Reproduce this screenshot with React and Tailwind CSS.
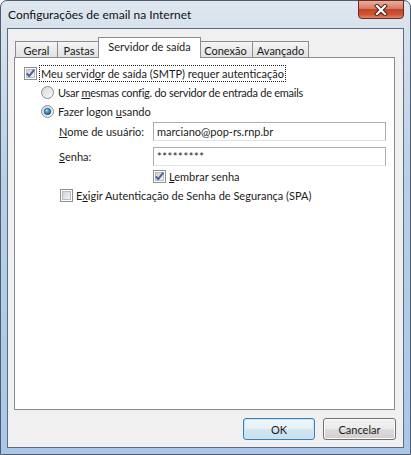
import React from 'react';

const font = "font-['Lato','Liberation_Sans',sans-serif]";

const CheckBox = ({ checked }) => (
  <svg width="13" height="13" viewBox="0 0 13 13" className="shrink-0">
    <defs>
      <linearGradient id="cbg" x1="0" y1="0" x2="1" y2="1">
        <stop offset="0" stopColor="#cbcfd5" />
        <stop offset="1" stopColor="#f7f7f7" />
      </linearGradient>
    </defs>
    <rect x="0.5" y="0.5" width="12" height="12" fill="#fff" stroke="#8e8f8f" />
    <rect x="2.5" y="2.5" width="8" height="8" fill="url(#cbg)" stroke="#b8bcc2" />
    {checked && (
      <path d="M2.8 6.4 L5.2 9.2 L10.3 2.6" fill="none" stroke="#4a5f97" strokeWidth="1.9" strokeLinejoin="round" />
    )}
  </svg>
);

const Radio = ({ checked }) => (
  <svg width="13" height="13" viewBox="0 0 13 13" className="shrink-0">
    <defs>
      <linearGradient id="rbg" x1="0" y1="0" x2="1" y2="1">
        <stop offset="0" stopColor="#d2d4d8" />
        <stop offset="1" stopColor="#fbfbfb" />
      </linearGradient>
      <radialGradient id="rdot" cx="0.4" cy="0.35" r="0.7">
        <stop offset="0" stopColor="#9fe0ff" />
        <stop offset="0.5" stopColor="#2c8ec9" />
        <stop offset="1" stopColor="#154d7a" />
      </radialGradient>
    </defs>
    <circle cx="6.5" cy="6.5" r="6" fill="url(#rbg)" stroke="#8e8f8f" />
    {checked && <circle cx="6.5" cy="6.5" r="3.3" fill="url(#rdot)" stroke="#1f4a73" strokeWidth="0.6" />}
  </svg>
);

const Tab = ({ label, className, active }) => (
  <div
    className={
      active
        ? `relative z-10 h-[21px] -mb-px bg-white border border-b-0 border-[#898c95] flex items-start justify-center pt-[3px] ${className}`
        : `h-[16px] bg-gradient-to-b from-[#f5f5f5] to-[#e2e2e2] border border-b-0 border-[#898c95] flex items-center justify-center pt-px ${className}`
    }
  >
    {label}
  </div>
);

const Button = ({ children, primary }) => (
  <button
    className={
      primary
        ? 'w-[72px] h-[22px] rounded-[3px] border border-[#3c7fb1] bg-[linear-gradient(#f0f7fb_0%,#e4f0f7_50%,#d2e6f2_50%,#c9e0ee_100%)] shadow-[inset_0_0_0_1px_#c5e4f7]'
        : 'w-[73px] h-[22px] rounded-[3px] border border-[#707070] bg-[linear-gradient(#f2f2f2_0%,#ebebeb_50%,#dddddd_50%,#cfcfcf_100%)] shadow-[inset_0_0_0_1px_#fbfbfb]'
    }
  >
    {children}
  </button>
);

export default function App() {
  return (
    <div className={`w-[411px] h-[455px] ${font} text-[11px] text-[#1b1b1b] leading-none`}>
      <div className="w-full h-full rounded-t-[7px] border border-[#4e5c6e] bg-[linear-gradient(180deg,#dfe7f0_0%,#d3dfec_10%,#b8cfe8_40%,#a9c7e8_100%)] flex flex-col">
        {/* Title bar */}
        <div className="h-[27px] flex items-start justify-between shrink-0">
          <div className="pl-[7px] pt-[8px] text-[12px] text-[#111]">Configurações de email na Internet</div>
          <div className="mr-[6px] -mt-px w-[46px] h-[19px] rounded-b-[4px] border border-[#6a2a20] bg-[linear-gradient(180deg,#eab0a0_0%,#d77a62_45%,#c4432b_50%,#d05535_80%,#e08868_100%)] flex items-center justify-center">
            <svg width="14" height="12" viewBox="0 0 14 12">
              <path d="M3 2 L11 10 M11 2 L3 10" stroke="#3b1d18" strokeWidth="4" strokeLinecap="square" />
              <path d="M3 2 L11 10 M11 2 L3 10" stroke="#fff" strokeWidth="2.2" strokeLinecap="square" />
            </svg>
          </div>
        </div>

        {/* Client area */}
        <div className="mx-[6px] mb-[6px] flex-1 border border-[#5c6b7d] bg-[#f0f0f0] flex flex-col">
          <div className="pt-[8px] pl-[6px] pr-[7px]">
            {/* Tabs */}
            <div className="flex items-end h-[20px]">
              <Tab label="Geral" className="w-[43px] ml-px" />
              <Tab label="Pastas" className="w-[44px] -ml-px" />
              <Tab label="Servidor de saída" className="w-[103px] -ml-[3px]" active />
              <Tab label="Conexão" className="w-[55px] -ml-[3px]" />
              <Tab label="Avançado" className="w-[57px] -ml-px" />
            </div>

            {/* Panel */}
            <div className="w-[381px] h-[353px] bg-white border border-[#898c95] pt-[6px]">
              <div className="h-[19px] flex items-center pl-[9px]">
                <CheckBox checked />
                <span className="ml-[2px] px-px py-[2px] border border-dotted border-[#222]">
                  Meu servid<u>o</u>r de saída (SMTP) requer autenticação
                </span>
              </div>
              <div className="h-[19px] flex items-center pl-[26px]">
                <Radio />
                <span className="ml-[4px] tracking-[-0.25px]">Usar <u>m</u>esmas config. do servidor de entrada de emails</span>
              </div>
              <div className="h-[19px] flex items-center pl-[26px]">
                <Radio checked />
                <span className="ml-[4px]">Fazer logon <u>u</u>sando</span>
              </div>
              <div className="h-[19px] flex items-center pl-[44px] mt-[1px]">
                <span className="w-[94px]"><u>N</u>ome de usuário:</span>
                <div className="w-[233px] h-full border border-[#abadb3] border-b-[#dfe3e8] px-[3px] flex items-center">
                  marciano@pop-rs.rnp.br
                </div>
              </div>
              <div className="h-[19px] flex items-center pl-[44px] mt-[6px]">
                <span className="w-[94px]"><u>S</u>enha:</span>
                <div className="w-[233px] h-full border border-[#abadb3] border-b-[#dfe3e8] px-[3px] flex items-center text-[11px] tracking-[0.6px]">
                  *********
                </div>
              </div>
              <div className="h-[19px] flex items-center pl-[138px] mt-[1px]">
                <CheckBox checked />
                <span className="ml-[3px]"><u>L</u>embrar senha</span>
              </div>
              <div className="h-[19px] flex items-center pl-[45px]">
                <CheckBox />
                <span className="ml-[3px]">E<u>x</u>igir Autenticação de Senha de Segurança (SPA)</span>
              </div>
            </div>
          </div>

          {/* Buttons */}
          <div className="flex justify-end gap-[8px] pr-[7px] pt-[8px]">
            <Button primary>OK</Button>
            <Button>Cancelar</Button>
          </div>
        </div>
      </div>
    </div>
  );
}
